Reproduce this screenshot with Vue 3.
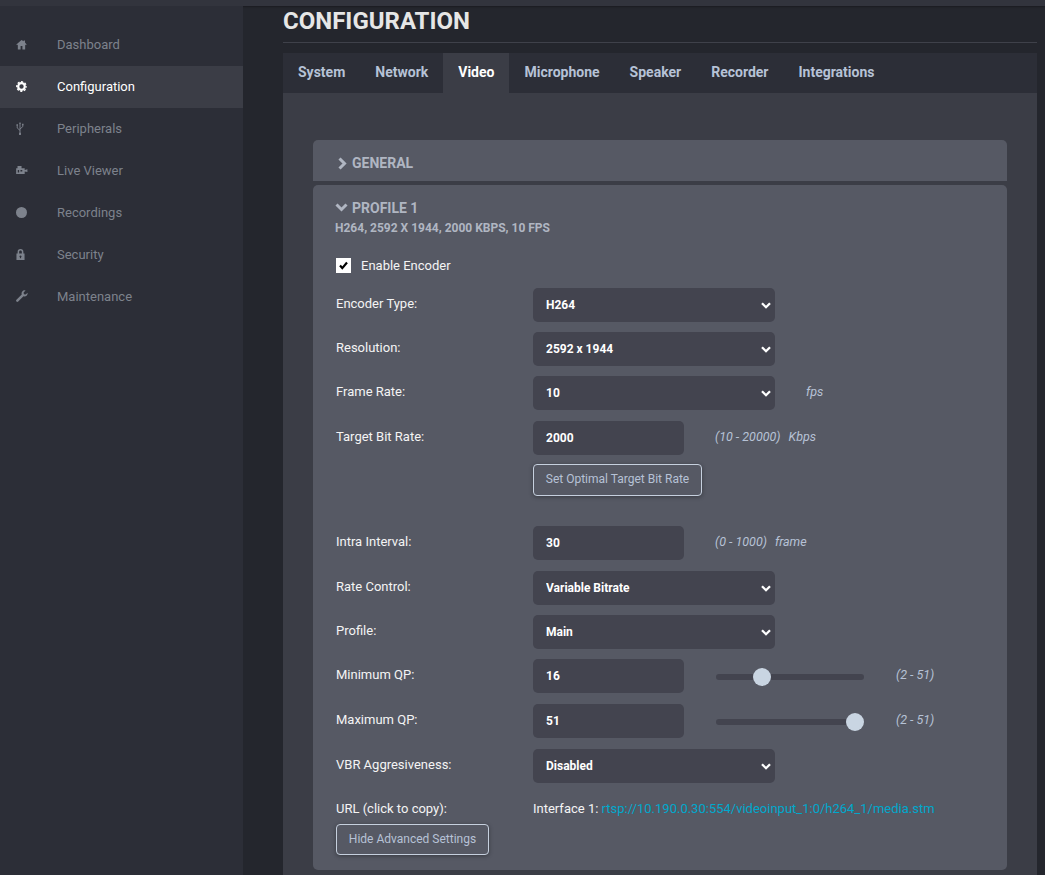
<script setup>
import { ref } from 'vue'

const navItems = [
  { label: 'Dashboard', icon: 'home' },
  { label: 'Configuration', icon: 'cog', active: true },
  { label: 'Peripherals', icon: 'usb' },
  { label: 'Live Viewer', icon: 'camera' },
  { label: 'Recordings', icon: 'circle' },
  { label: 'Security', icon: 'lock' },
  { label: 'Maintenance', icon: 'wrench' }
]

const tabs = ['System', 'Network', 'Video', 'Microphone', 'Speaker', 'Recorder', 'Integrations']

const encoderType = ref('H264')
const resolution = ref('2592 x 1944')
const frameRate = ref('10')
const rateControl = ref('Variable Bitrate')
const profile = ref('Main')
const vbr = ref('Disabled')
const minQp = ref(16)
const maxQp = ref(51)
</script>

<template>
  <div class="page">
    <div class="topbar"></div>
    <div class="layout">
      <nav class="sidebar">
        <a v-for="item in navItems" :key="item.label" class="nav-item" :class="{ active: item.active }">
          <span class="nav-icon">
            <svg v-if="item.icon === 'home'" width="11" height="11" viewBox="0 0 12 12"><path fill="currentColor" d="M6 1 .4 6l.7.8.9-.7V11.500h3V7.600h2V11.500h3V6.100l.9.7.7-.8L9.800 3.800V1.500H8.300v1L6 1z"/></svg>
            <svg v-if="item.icon === 'cog'" width="11" height="11" viewBox="0 0 11 11"><circle cx="5.500" cy="5.500" r="3.300" fill="none" stroke="currentColor" stroke-width="2.200"/><circle cx="5.500" cy="5.500" r="4.700" fill="none" stroke="currentColor" stroke-width="1.400" stroke-dasharray="2.100 1.590" stroke-dashoffset="1.050"/></svg>
            <svg v-if="item.icon === 'usb'" width="8" height="13" viewBox="0 0 8 14"><path fill="none" stroke="currentColor" d="M4 1.500V13M1 3.500v3L4 9M7 3v2L4 7.500"/><path fill="currentColor" d="M4 0 2.800 2h2.400L4 0zM.2 2.500h1.600V4H.2zM6.200 2h1.600v1.500H6.200zM3 11.500h2V14H3z"/></svg>
            <svg v-if="item.icon === 'camera'" width="12" height="9" viewBox="0 0 13 10"><path fill="currentColor" fill-rule="evenodd" d="M1.500 0h4.500v2.500H9.500v2l3-1v3.300l-3-.8v3H0V2.500h1.500V0zM1.800 4.500v2.800h1.500V4.500H1.800zm3 0v1.500h2V4.500h-2z"/></svg>
            <svg v-if="item.icon === 'circle'" width="11" height="11" viewBox="0 0 11 11"><circle cx="5.500" cy="5.500" r="5.500" fill="currentColor"/></svg>
            <svg v-if="item.icon === 'lock'" width="9" height="11" viewBox="0 0 10 12"><path fill="currentColor" fill-rule="evenodd" d="M5 0a3.200 3.200 0 0 1 3.200 3.200V5H9.500v7H.5V5h1.300V3.200A3.200 3.200 0 0 1 5 0zm0 1.600c-.9 0-1.500.7-1.500 1.600V5h3V3.200c0-.9-.6-1.600-1.500-1.600zM5 7a1.100 1.100 0 0 0-.6 2v1.200h1.200V9A1.100 1.100 0 0 0 5 7z"/></svg>
            <svg v-if="item.icon === 'wrench'" width="12" height="12" viewBox="0 0 13 13"><path fill="currentColor" d="M9.300.3a3.400 3.400 0 0 0-3.100 4.500L.5 10.500a1.300 1.300 0 0 0 1.900 1.900l5.700-5.700A3.400 3.400 0 0 0 12.600 3l-2.200 2-1.800-.5-.4-1.700L10.400.5A3.400 3.400 0 0 0 9.300.3z"/></svg>
          </span>
          <span class="nav-label">{{ item.label }}</span>
        </a>
      </nav>

      <main class="main">
        <h1 class="title">CONFIGURATION</h1>
        <div class="tabs">
          <span v-for="tab in tabs" :key="tab" class="tab" :class="{ selected: tab === 'Video' }">{{ tab }}</span>
        </div>
        <div class="panel">
          <section class="card card-closed">
            <div class="card-head">
              <svg class="chev" width="12" height="13" viewBox="0 0 12 13"><path fill="none" stroke="currentColor" stroke-width="3" d="M3.500 1.500 8.500 6.500l-5 5"/></svg>
              GENERAL
            </div>
          </section>

          <section class="card card-open">
            <div class="card-head">
              <svg class="chev" width="13" height="10" viewBox="0 0 13 10"><path fill="none" stroke="currentColor" stroke-width="3" d="m1.500 1.500 5 5 5-5"/></svg>
              PROFILE 1
            </div>
            <div class="card-sub">H264, 2592 X 1944, 2000 KBPS, 10 FPS</div>

            <label class="enable">
              <span class="checkbox">
                <svg width="9" height="9" viewBox="0 0 9 9"><path fill="none" stroke="#000" stroke-width="2.200" d="m1 4.500 2.300 2.600L8 1.500"/></svg>
              </span>
              Enable Encoder
            </label>

            <div class="row first">
              <span class="label">Encoder Type:</span>
              <span class="sel-wrap">
                <select v-model="encoderType" class="ctl sel"><option>H264</option><option>H265</option></select>
                <svg class="arrow" width="10" height="7" viewBox="0 0 10 7"><path fill="none" stroke="#fff" stroke-width="2.300" d="m1 1.200 4 4 4-4"/></svg>
              </span>
            </div>
            <div class="row">
              <span class="label">Resolution:</span>
              <span class="sel-wrap">
                <select v-model="resolution" class="ctl sel"><option>2592 x 1944</option><option>1920 x 1080</option></select>
                <svg class="arrow" width="10" height="7" viewBox="0 0 10 7"><path fill="none" stroke="#fff" stroke-width="2.300" d="m1 1.200 4 4 4-4"/></svg>
              </span>
            </div>
            <div class="row">
              <span class="label">Frame Rate:</span>
              <span class="sel-wrap">
                <select v-model="frameRate" class="ctl sel"><option>10</option><option>15</option><option>30</option></select>
                <svg class="arrow" width="10" height="7" viewBox="0 0 10 7"><path fill="none" stroke="#fff" stroke-width="2.300" d="m1 1.200 4 4 4-4"/></svg>
              </span>
              <span class="hint fps">fps</span>
            </div>
            <div class="row wide">
              <span class="label">Target Bit Rate:</span>
              <input class="ctl num" value="2000" />
              <span class="hint range-hint">(10 - 20000)</span>
              <span class="hint unit">Kbps</span>
            </div>
            <div class="btn-row">
              <button class="btn optimal">Set Optimal Target Bit Rate</button>
            </div>

            <div class="row intra">
              <span class="label">Intra Interval:</span>
              <input class="ctl num" value="30" />
              <span class="hint range-hint">(0 - 1000)</span>
              <span class="hint unit">frame</span>
            </div>
            <div class="row wide">
              <span class="label">Rate Control:</span>
              <span class="sel-wrap">
                <select v-model="rateControl" class="ctl sel"><option>Variable Bitrate</option><option>Constant Bitrate</option></select>
                <svg class="arrow" width="10" height="7" viewBox="0 0 10 7"><path fill="none" stroke="#fff" stroke-width="2.300" d="m1 1.200 4 4 4-4"/></svg>
              </span>
            </div>
            <div class="row">
              <span class="label">Profile:</span>
              <span class="sel-wrap">
                <select v-model="profile" class="ctl sel"><option>Main</option><option>High</option><option>Baseline</option></select>
                <svg class="arrow" width="10" height="7" viewBox="0 0 10 7"><path fill="none" stroke="#fff" stroke-width="2.300" d="m1 1.200 4 4 4-4"/></svg>
              </span>
            </div>
            <div class="row">
              <span class="label">Minimum QP:</span>
              <input class="ctl num" :value="minQp" />
              <input v-model="minQp" class="slider" type="range" min="2" max="51" />
              <span class="hint qp">(2 - 51)</span>
            </div>
            <div class="row wide">
              <span class="label">Maximum QP:</span>
              <input class="ctl num" :value="maxQp" />
              <input v-model="maxQp" class="slider" type="range" min="2" max="51" />
              <span class="hint qp">(2 - 51)</span>
            </div>
            <div class="row wide">
              <span class="label">VBR Aggresiveness:</span>
              <span class="sel-wrap">
                <select v-model="vbr" class="ctl sel"><option>Disabled</option><option>Low</option><option>High</option></select>
                <svg class="arrow" width="10" height="7" viewBox="0 0 10 7"><path fill="none" stroke="#fff" stroke-width="2.300" d="m1 1.200 4 4 4-4"/></svg>
              </span>
            </div>
            <div class="url-row">
              <span class="label">URL (click to copy):</span>
              <span class="url">Interface 1: <a class="link">rtsp://10.190.0.30:554/videoinput_1:0/h264_1/media.stm</a></span>
            </div>
            <button class="btn hide">Hide Advanced Settings</button>
          </section>
        </div>
      </main>
    </div>
  </div>
</template>

<style>
html, body {
  margin: 0;
  height: 100%;
  overflow: hidden;
  background: #24262d;
}
</style>

<style scoped>
.page {
  height: 875px;
  overflow: hidden;
  display: flex;
  flex-direction: column;
  font-family: Roboto, "Liberation Sans", sans-serif;
  font-size: 13px;
  color: #fff;
}
.topbar {
  height: 6px;
  flex: none;
  background: #32343d;
  box-shadow: 0 1px 2px rgba(0, 0, 0, 0.3);
}
.layout {
  flex: 1;
  display: flex;
  min-height: 0;
}
.sidebar {
  width: 243px;
  flex: none;
  padding-top: 18px;
  background: #2c2e37;
}
.nav-item {
  display: flex;
  align-items: center;
  height: 42px;
  box-sizing: border-box;
  padding-bottom: 2px;
  color: #7d828c;
}
.nav-item.active {
  background: #3b3d46;
  color: #fff;
}
.nav-icon {
  width: 57px;
  padding-left: 16px;
  box-sizing: border-box;
  display: flex;
  align-items: center;
  flex: none;
}
.main {
  flex: 1;
  min-width: 0;
  padding: 0 8px 0 40px;
  display: flex;
  flex-direction: column;
}
.title {
  margin: 0;
  height: 36px;
  line-height: 30px;
  font-size: 24px;
  font-weight: 700;
  color: #e6e6e6;
  border-bottom: 1px solid #3f414a;
}
.tabs {
  display: flex;
  margin-top: 10px;
  height: 40px;
  flex: none;
  background: #2c2e37;
}
.tab {
  padding: 0 15px;
  line-height: 38px;
  font-size: 14px;
  font-weight: 700;
  color: #b6c2d6;
}
.tab.selected {
  background: #3b3d46;
  color: #fff;
}
.panel {
  flex: 1;
  background: #3b3d46;
  padding: 47px 30px 0;
}
.card {
  background: #565964;
  border-radius: 5px;
}
.card-closed {
  height: 41px;
  border-radius: 5px 5px 0 0;
  padding-top: 15px;
  box-sizing: border-box;
}
.card-open {
  margin-top: 4px;
  height: 685px;
  box-sizing: border-box;
  padding: 15px 0 0 23px;
}
.card-head {
  display: flex;
  align-items: center;
  gap: 4px;
  padding-left: 23px;
  height: 16px;
  font-size: 14px;
  font-weight: 700;
  color: #b0b6c2;
}
.card-open .card-head {
  padding-left: 0;
  margin-left: -1px;
  gap: 4px;
}
.card-sub {
  margin-top: 4px;
  margin-left: -1px;
  font-size: 12px;
  font-weight: 700;
  line-height: 16px;
  color: #b0b6c2;
}
.enable {
  display: flex;
  align-items: center;
  gap: 10px;
  margin-top: 21px;
  height: 16px;
  color: #f4f4f4;
}
.checkbox {
  width: 15px;
  height: 15px;
  background: #fff;
  display: flex;
  align-items: center;
  justify-content: center;
}
.row {
  display: flex;
  align-items: flex-start;
  margin-top: 10px;
  height: 34px;
}
.row.first {
  margin-top: 15px;
}
.row.wide {
  margin-top: 11px;
}
.row.intra {
  margin-top: 30px;
}
.label {
  width: 197px;
  flex: none;
  padding-top: 8px;
  line-height: 15px;
  color: #f4f4f4;
}
.ctl {
  height: 34px;
  box-sizing: border-box;
  background-color: #43444f;
  border: 0;
  border-radius: 5px;
  padding: 0 9px 0 13px;
  font-family: inherit;
  font-size: 12px;
  font-weight: 700;
  color: #fff;
  outline: none;
}
.sel-wrap {
  position: relative;
  display: block;
  width: 242px;
  height: 34px;
}
.sel {
  display: block;
  width: 242px;
  -webkit-appearance: none;
  appearance: none;
}
.arrow {
  position: absolute;
  right: 4px;
  top: 14px;
  pointer-events: none;
}
.num {
  width: 151px;
}
.hint {
  font-size: 12.500px;
  font-style: italic;
  color: #b6c2d6;
  line-height: 32px;
}
.fps {
  margin-left: 31px;
}
.range-hint {
  margin-left: 31px;
}
.unit {
  margin-left: 8px;
}
.qp {
  margin-left: 32px;
  line-height: 31px;
}
.slider {
  -webkit-appearance: none;
  appearance: none;
  width: 148px;
  height: 20px;
  margin: 8px 0 0 32px;
  background: transparent;
}
.slider::-webkit-slider-runnable-track {
  height: 6px;
  border-radius: 3px;
  background: #43444f;
}
.slider::-webkit-slider-thumb {
  -webkit-appearance: none;
  width: 18px;
  height: 18px;
  margin-top: -6px;
  border-radius: 50%;
  background: #c9d5e2;
}
.btn-row {
  margin-top: 9px;
  padding-left: 197px;
}
.btn {
  display: block;
  box-sizing: border-box;
  background: #565964;
  border: 1px solid #c6d0de;
  border-radius: 4px;
  font-family: inherit;
  font-size: 12px;
  color: #b6c2d6;
  padding: 0 0 2px;
  box-shadow: 0 1px 4px rgba(0, 0, 0, 0.35);
}
.optimal {
  width: 169px;
  height: 32px;
}
.url-row {
  display: flex;
  margin-top: 10px;
  height: 31px;
}
.url {
  padding-top: 8px;
  line-height: 15px;
  color: #f4f4f4;
}
.link {
  color: #00a8cc;
}
.hide {
  width: 153px;
  height: 31px;
}
</style>
